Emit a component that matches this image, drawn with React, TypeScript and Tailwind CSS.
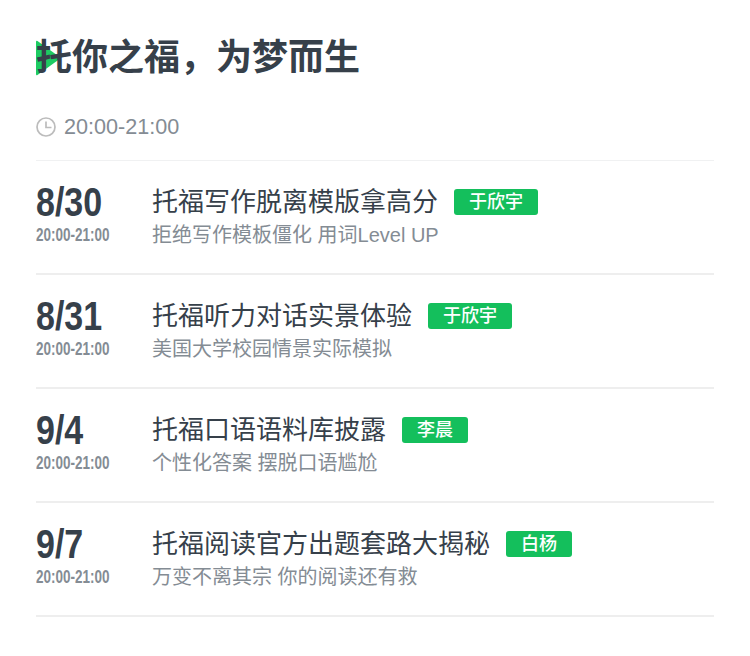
const rows = [
  { date: '8/30', title: '托福写作脱离模版拿高分', sub: '拒绝写作模板僵化 用词Level UP', tag: '于欣宇', tagW: 'w-[84px]' },
  { date: '8/31', title: '托福听力对话实景体验', sub: '美国大学校园情景实际模拟', tag: '于欣宇', tagW: 'w-[84px]' },
  { date: '9/4', title: '托福口语语料库披露', sub: '个性化答案 摆脱口语尴尬', tag: '李晨', tagW: 'w-[66px]' },
  { date: '9/7', title: '托福阅读官方出题套路大揭秘', sub: '万变不离其宗 你的阅读还有救', tag: '白杨', tagW: 'w-[66px]' },
]

export default function App() {
  return (
    <div className="w-[750px] h-[656px] bg-white px-9 pt-[33px] font-['Liberation_Sans','Noto_Sans_CJK_SC',sans-serif]">
      <h1 className="relative text-[36px] leading-[50px] font-bold text-[#36404a]">
        <svg className="absolute left-0 top-[7px]" width="26" height="36" viewBox="0 0 26 36">
          <path d="M1.5 1L25 18L1.5 35Q0 36 0 34V2Q0 0 1.5 1Z" fill="#1dcb62" />
        </svg>
        <span className="relative">托你之福，为梦而生</span>
      </h1>
      <div className="mt-[32px] flex items-center gap-2 h-6 text-[#848c94] text-[21.6px]">
        <svg width="20" height="20" viewBox="0 0 20 20" fill="none" stroke="#bcbcbc" strokeWidth="1.7">
          <circle cx="10" cy="10" r="9" />
          <path d="M10 4.5v6h5.5" />
        </svg>
        20:00-21:00
      </div>
      <div className="mt-[21px] border-t border-[#f0f1f2]">
        {rows.map((r) => (
          <div key={r.date} className="flex h-[114px] border-b-2 border-[#eeeeee] pt-[21px]">
            <div className="w-[116px]">
              <div className="text-[40px] leading-[40px] font-bold text-[#36404a] scale-x-[0.85] origin-left">{r.date}</div>
              <div className="mt-[3px] text-[18px] leading-5 font-bold text-[#848c94] scale-x-[0.75] origin-left whitespace-nowrap">20:00-21:00</div>
            </div>
            <div>
              <div className="flex items-center gap-4 h-10">
                <span className="text-[26px] text-[#36404a]">{r.title}</span>
                <span className={`${r.tagW} h-[26px] rounded-[3px] bg-[#14bf5c] text-white text-[18px] font-medium flex items-center justify-center`}>{r.tag}</span>
              </div>
              <div className="text-[20px] leading-[26px] text-[#848c94]">{r.sub}</div>
            </div>
          </div>
        ))}
      </div>
    </div>
  )
}
